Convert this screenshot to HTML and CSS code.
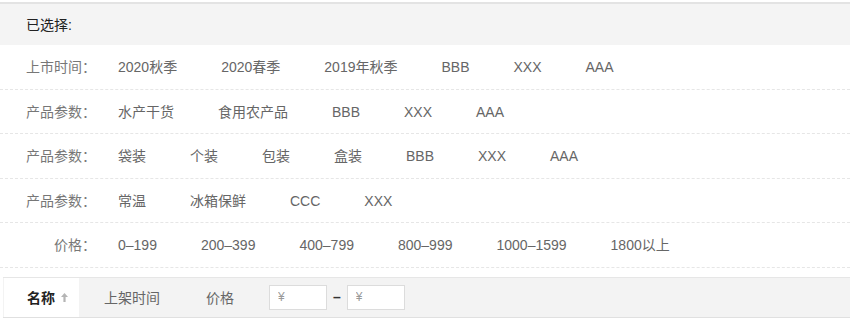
FILE: index.html
```html
<!DOCTYPE html>
<html lang="zh-CN">
<head>
    <meta charset="UTF-8">
    <title>筛选</title>
    <link rel="stylesheet" href="styles.css">
</head>
<body>
    <div class="filter">
        <div class="selected">已选择:</div>
        <div class="filter-row">
            <span class="label">上市时间：</span>
            <div class="options">
                <a>2020秋季</a><a>2020春季</a><a>2019年秋季</a><a>BBB</a><a>XXX</a><a>AAA</a>
            </div>
        </div>
        <div class="filter-row">
            <span class="label">产品参数：</span>
            <div class="options">
                <a>水产干货</a><a>食用农产品</a><a>BBB</a><a>XXX</a><a>AAA</a>
            </div>
        </div>
        <div class="filter-row">
            <span class="label">产品参数：</span>
            <div class="options">
                <a>袋装</a><a>个装</a><a>包装</a><a>盒装</a><a>BBB</a><a>XXX</a><a>AAA</a>
            </div>
        </div>
        <div class="filter-row">
            <span class="label">产品参数：</span>
            <div class="options">
                <a>常温</a><a>冰箱保鲜</a><a>CCC</a><a>XXX</a>
            </div>
        </div>
        <div class="filter-row">
            <span class="label">价格：</span>
            <div class="options">
                <a>0–199</a><a>200–399</a><a>400–799</a><a>800–999</a><a>1000–1599</a><a>1800以上</a>
            </div>
        </div>
    </div>

    <div class="sort-bar">
        <div class="sort-item active">名称
            <svg class="arrow" width="7" height="9" viewBox="0 0 7 9">
                <path d="M3.5 0 L7 4 H4.6 V9 H2.4 V4 H0 Z" fill="#b5b5b5"/>
            </svg>
        </div>
        <div class="sort-item">上架时间</div>
        <div class="sort-item price">价格</div>
        <input class="price-input" type="text" placeholder="¥">
        <span class="dash">–</span>
        <input class="price-input" type="text" placeholder="¥">
    </div>
</body>
</html>
```

FILE: styles.css
```css
* {
    margin: 0;
    padding: 0;
    box-sizing: border-box;
}

body {
    font-family: 'Liberation Sans', 'Noto Sans CJK SC', sans-serif;
    font-size: 14px;
    color: #666;
    background-color: #fff;
    padding-top: 2px;
}

.selected {
    height: 43px;
    line-height: 42px;
    padding-left: 26px;
    background-color: #f4f4f4;
    border-top: 2px solid #e3e3e3;
    color: #222;
}

.filter-row {
    display: flex;
    align-items: baseline;
    height: 44.5px;
    padding: 12px 0 0 26px;
    line-height: 20px;
    border-bottom: 1px dashed #e6e6e6;
}

.filter-row .label {
    width: 70px;
    text-align: right;
    color: #777;
    margin-right: 22px;
}

.options {
    display: flex;
    align-items: baseline;
    gap: 44px;
}

.options a {
    color: #666;
    text-decoration: none;
    cursor: pointer;
}

.sort-bar {
    display: flex;
    align-items: center;
    height: 41px;
    margin: 9px 0 0 3px;
    background-color: #f3f3f3;
    border-top: 1px solid #e6e6e6;
    border-bottom: 1px solid #e0e0e0;
}

.sort-item {
    display: flex;
    align-items: center;
    height: 100%;
    margin-left: 25px;
    color: #666;
}

.sort-item.active {
    margin-left: 1px;
    padding: 0 11px 0 23px;
    background-color: #fff;
    color: #222;
    font-weight: bold;
}

.sort-item.price {
    margin-left: 46px;
}

.arrow {
    margin-left: 6px;
}

.price-input {
    width: 58px;
    height: 25px;
    margin-left: 35px;
    padding-left: 8px;
    border: 1px solid #dcdcdc;
    background-color: #fff;
    font-family: inherit;
    font-size: 12px;
    outline: none;
}

.price-input::placeholder {
    color: #999;
}

.dash {
    margin: 0 6px 0 6px;
    color: #333;
    font-weight: bold;
}

.dash + .price-input {
    margin-left: 0;
}
```
